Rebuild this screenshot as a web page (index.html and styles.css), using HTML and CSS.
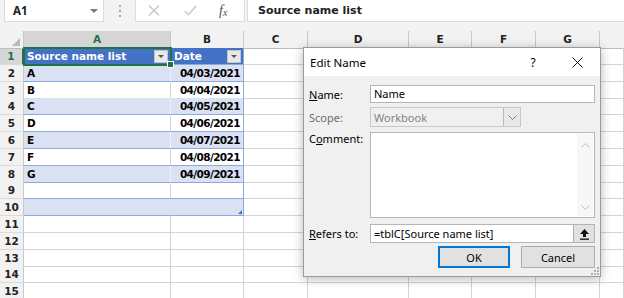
FILE: index.html
```html
<!DOCTYPE html>
<html lang="en">
<head>
    <meta charset="UTF-8">
    <meta name="viewport" content="width=device-width, initial-scale=1.0">
    <title>Edit Name</title>
    <link rel="stylesheet" href="styles.css">
</head>
<body>
    <div class="app">
        <div class="fbar">
            <div class="namebox"><span>A1</span><span class="caret"></span></div>
            <div class="dots"><i></i><i></i><i></i></div>
            <div class="fxbox">
                <svg class="ico-x" width="12" height="11" viewBox="0 0 12 11"><path d="M1 0.5 L11 10.5 M11 0.5 L1 10.5" stroke="#c6c6c6" stroke-width="1.3" fill="none"/></svg>
                <svg class="ico-ok" width="13" height="11" viewBox="0 0 13 11"><path d="M0.8 6 L4.5 9.8 L12.2 0.8" stroke="#c6c6c6" stroke-width="1.4" fill="none"/></svg>
                <span class="fx">f<sub>x</sub></span>
            </div>
            <div class="formula">Source name list</div>
        </div>

        <div class="sheet">
            <div class="row hdr">
                <div class="corner"><span></span></div>
                <div class="ch sel">A</div><div class="ch">B</div><div class="ch">C</div><div class="ch">D</div>
                <div class="ch">E</div><div class="ch">F</div><div class="ch">G</div><div class="ch last"></div>
            </div>
            <div class="row">
                <div class="rh sel">1</div>
                <div class="c t th a1"><span>Source name list</span><span class="filter"></span></div>
                <div class="c t th tb"><span>Date</span><span class="filter"></span></div>
                <div class="c"></div><div class="c"></div><div class="c"></div><div class="c"></div><div class="c"></div><div class="c"></div>
            </div>
            <div class="row">
                <div class="rh">2</div>
                <div class="c t band">A</div><div class="c t band tb num">04/03/2021</div>
                <div class="c"></div><div class="c"></div><div class="c"></div><div class="c"></div><div class="c"></div><div class="c"></div>
            </div>
            <div class="row">
                <div class="rh">3</div>
                <div class="c t">B</div><div class="c t tb num">04/04/2021</div>
                <div class="c"></div><div class="c"></div><div class="c"></div><div class="c"></div><div class="c"></div><div class="c"></div>
            </div>
            <div class="row">
                <div class="rh">4</div>
                <div class="c t band">C</div><div class="c t band tb num">04/05/2021</div>
                <div class="c"></div><div class="c"></div><div class="c"></div><div class="c"></div><div class="c"></div><div class="c"></div>
            </div>
            <div class="row">
                <div class="rh">5</div>
                <div class="c t">D</div><div class="c t tb num">04/06/2021</div>
                <div class="c"></div><div class="c"></div><div class="c"></div><div class="c"></div><div class="c"></div><div class="c"></div>
            </div>
            <div class="row">
                <div class="rh">6</div>
                <div class="c t band">E</div><div class="c t band tb num">04/07/2021</div>
                <div class="c"></div><div class="c"></div><div class="c"></div><div class="c"></div><div class="c"></div><div class="c"></div>
            </div>
            <div class="row">
                <div class="rh">7</div>
                <div class="c t">F</div><div class="c t tb num">04/08/2021</div>
                <div class="c"></div><div class="c"></div><div class="c"></div><div class="c"></div><div class="c"></div><div class="c"></div>
            </div>
            <div class="row">
                <div class="rh">8</div>
                <div class="c t band">G</div><div class="c t band tb num">04/09/2021</div>
                <div class="c"></div><div class="c"></div><div class="c"></div><div class="c"></div><div class="c"></div><div class="c"></div>
            </div>
            <div class="row">
                <div class="rh">9</div>
                <div class="c t"></div><div class="c t tb"></div>
                <div class="c"></div><div class="c"></div><div class="c"></div><div class="c"></div><div class="c"></div><div class="c"></div>
            </div>
            <div class="row">
                <div class="rh">10</div>
                <div class="c t band solid"></div><div class="c t band tb end"></div>
                <div class="c"></div><div class="c"></div><div class="c"></div><div class="c"></div><div class="c"></div><div class="c"></div>
            </div>
            <div class="row">
                <div class="rh">11</div>
                <div class="c"></div><div class="c"></div><div class="c"></div><div class="c"></div><div class="c"></div><div class="c"></div><div class="c"></div><div class="c"></div>
            </div>
            <div class="row">
                <div class="rh">12</div>
                <div class="c"></div><div class="c"></div><div class="c"></div><div class="c"></div><div class="c"></div><div class="c"></div><div class="c"></div><div class="c"></div>
            </div>
            <div class="row">
                <div class="rh">13</div>
                <div class="c"></div><div class="c"></div><div class="c"></div><div class="c"></div><div class="c"></div><div class="c"></div><div class="c"></div><div class="c"></div>
            </div>
            <div class="row">
                <div class="rh">14</div>
                <div class="c"></div><div class="c"></div><div class="c"></div><div class="c"></div><div class="c"></div><div class="c"></div><div class="c"></div><div class="c"></div>
            </div>
            <div class="row">
                <div class="rh">15</div>
                <div class="c"></div><div class="c"></div><div class="c"></div><div class="c"></div><div class="c"></div><div class="c"></div><div class="c"></div><div class="c"></div>
            </div>
        </div>

        <div class="dialog">
            <div class="dlg-title">
                <span class="dlg-name">Edit Name</span>
                <span class="dlg-help">?</span>
                <span class="dlg-close">
                    <svg width="11" height="11" viewBox="0 0 11 11"><path d="M0.5 0.5 L10.5 10.5 M10.5 0.5 L0.5 10.5" stroke="#111" stroke-width="1" fill="none"/></svg>
                </span>
            </div>
            <div class="dlg-body">
                <div class="frow f-name">
                    <label class="lbl"><u>N</u>ame:</label>
                    <div class="field">Name</div>
                </div>
                <div class="frow f-scope">
                    <label class="lbl off">Scope:</label>
                    <div class="combo">
                        <span>Workbook</span>
                        <span class="combo-btn">
                            <svg width="9" height="5" viewBox="0 0 9 5"><path d="M0.5 0.5 L4.5 4.5 L8.5 0.5" stroke="#7a7a7a" stroke-width="1" fill="none"/></svg>
                        </span>
                    </div>
                </div>
                <div class="frow f-comment">
                    <label class="lbl">C<u>o</u>mment:</label>
                    <div class="memo">
                        <div class="memo-bar">
                            <svg width="9" height="5" viewBox="0 0 9 5"><path d="M0.5 4.5 L4.5 0.5 L8.5 4.5" stroke="#bdbdbd" stroke-width="1" fill="none"/></svg>
                            <svg width="9" height="5" viewBox="0 0 9 5"><path d="M0.5 0.5 L4.5 4.5 L8.5 0.5" stroke="#bdbdbd" stroke-width="1" fill="none"/></svg>
                        </div>
                    </div>
                </div>
                <div class="frow f-refers">
                    <label class="lbl"><u>R</u>efers to:</label>
                    <div class="field ref">
                        <span>=tblC[Source name list]</span>
                        <span class="ref-btn">
                            <svg width="11" height="12" viewBox="0 0 11 12"><path d="M5.5 1 L10 6 L7 6 L7 9 L4 9 L4 6 L1 6 Z" fill="#111"/><rect x="1" y="10.5" width="9" height="1.3" fill="#111"/></svg>
                        </span>
                    </div>
                </div>
                <div class="btns">
                    <button class="btn ok">OK</button>
                    <button class="btn">Cancel</button>
                </div>
            </div>
            <svg class="grip" width="8" height="8" viewBox="0 0 8 8">
                <rect x="6" y="0" width="2" height="2" fill="#b0b0b0"/>
                <rect x="3" y="3" width="2" height="2" fill="#b0b0b0"/><rect x="6" y="3" width="2" height="2" fill="#b0b0b0"/>
                <rect x="0" y="6" width="2" height="2" fill="#b0b0b0"/><rect x="3" y="6" width="2" height="2" fill="#b0b0b0"/><rect x="6" y="6" width="2" height="2" fill="#b0b0b0"/>
            </svg>
        </div>
    </div>
</body>
</html>
```

FILE: styles.css
```css
body {
    margin: 0;
    padding: 0;
    background-color: #fff;
    font-family: "DejaVu Sans", Verdana, sans-serif;
    overflow: hidden;
}

.app {
    position: relative;
    width: 624px;
    height: 298px;
    overflow: hidden;
}

/* formula bar */

.fbar {
    display: flex;
    align-items: flex-start;
    height: 31px;
    padding-left: 4px;
    background-color: #f3f3f3;
    box-sizing: border-box;
}

.namebox {
    display: flex;
    align-items: center;
    justify-content: space-between;
    width: 100px;
    height: 22px;
    padding: 0 5px 0 8px;
    box-sizing: border-box;
    background-color: #fff;
    border: 1px solid #dcdcdc;
    border-top: none;
    font-family: "Noto Sans", sans-serif;
    font-weight: bold;
    font-size: 11.5px;
    color: #222;
}

.caret {
    width: 0;
    height: 0;
    border-left: 4px solid transparent;
    border-right: 4px solid transparent;
    border-top: 4px solid #7a7a7a;
}

.dots {
    display: flex;
    flex-direction: column;
    align-items: center;
    gap: 3px;
    width: 31px;
    padding-top: 5px;
}

.dots i {
    width: 2px;
    height: 2px;
    background-color: #a8a8a8;
}

.fxbox {
    display: flex;
    align-items: center;
    width: 110px;
    height: 22px;
    box-sizing: border-box;
    background-color: #fff;
    border: 1px solid #dcdcdc;
    border-top: none;
    padding-left: 12px;
}

.ico-ok {
    margin-left: 24px;
}

.fx {
    margin-left: 22px;
    font-family: "Liberation Serif", serif;
    font-style: italic;
    font-size: 14px;
    color: #555;
}

.fx sub {
    font-size: 10px;
    vertical-align: -1px;
}

.formula {
    flex: 1;
    height: 22px;
    margin-left: 2px;
    padding-left: 10px;
    box-sizing: border-box;
    background-color: #fff;
    border-left: 1px solid #dcdcdc;
    border-bottom: 1px solid #dcdcdc;
    font-weight: bold;
    font-size: 11px;
    line-height: 21px;
    color: #222;
}

/* sheet grid */

.row {
    display: grid;
    grid-template-columns: 24px 147px 73px 64px 101px 63px 64px 64px 24px;
    height: 16.8px;
}

.row.hdr {
    height: 17px;
}

.corner,
.ch {
    background-color: #f2f2f2;
    border-right: 1px solid #c8c8c8;
    border-bottom: 1px solid #bdbdbd;
    box-sizing: border-box;
}

.corner {
    position: relative;
}

.corner span {
    position: absolute;
    right: 3px;
    bottom: 2px;
    width: 0;
    height: 0;
    border-left: 8px solid transparent;
    border-bottom: 8px solid #b9b9b9;
}

.ch {
    text-align: center;
    font-weight: bold;
    font-size: 10.5px;
    line-height: 16px;
    color: #222;
}

.ch.sel {
    background-color: #d6d6d6;
    color: #217346;
    border-bottom: 2px solid #217346;
}

.ch.last {
    border-right: none;
}

.rh {
    background-color: #f2f2f2;
    border-right: 1px solid #c8c8c8;
    border-bottom: 1px solid #dadada;
    box-sizing: border-box;
    text-align: center;
    font-weight: bold;
    font-size: 10.5px;
    line-height: 16px;
    color: #222;
}

.rh.sel {
    background-color: #d6d6d6;
    color: #217346;
    border-right: 2px solid #217346;
}

.c {
    border-right: 1px solid #d4d4d4;
    border-bottom: 1px solid #d4d4d4;
    box-sizing: border-box;
    padding: 0 3px;
    font-weight: bold;
    font-size: 10.5px;
    line-height: 16px;
    color: #000;
    white-space: nowrap;
}

/* table cells */

.t {
    border-bottom-color: #8ea9db;
}

.band {
    background-color: #d9e1f2;
    border-right-color: #eef1f8;
}

.tb {
    border-right-color: #8ea9db;
}

.solid {
    border-right-color: #d9e1f2;
}

.num {
    text-align: right;
    padding-right: 3px;
    letter-spacing: -0.6px;
}

.th {
    display: flex;
    align-items: center;
    justify-content: space-between;
    padding-right: 2px;
    background-color: #4472c4;
    color: #fff;
    border-bottom-color: #8ea9db;
}

.a1 {
    position: relative;
    border-right-color: #4472c4;
    outline: 2px solid #217346;
    outline-offset: -1px;
}

.a1::after {
    content: "";
    position: absolute;
    right: -4px;
    bottom: -4px;
    width: 5px;
    height: 5px;
    background-color: #217346;
    border: 1px solid #fff;
}

.filter {
    display: flex;
    align-items: center;
    justify-content: center;
    width: 14px;
    height: 13px;
    background-color: #e8e8e8;
    border: 1px solid #c4c4c4;
    box-sizing: border-box;
}

.filter::before {
    content: "";
    border-left: 3px solid transparent;
    border-right: 3px solid transparent;
    border-top: 3px solid #555;
}

.end {
    position: relative;
}

.end::after {
    content: "";
    position: absolute;
    right: 1px;
    bottom: 1px;
    border-left: 4px solid transparent;
    border-bottom: 4px solid #4472c4;
}

/* Edit Name dialog */

.dialog {
    position: absolute;
    left: 303px;
    top: 47px;
    width: 298px;
    height: 230px;
    box-sizing: border-box;
    background-color: #f0f0f0;
    border: 1px solid #9b9b9b;
    box-shadow: 0 2px 10px rgba(0, 0, 0, 0.28);
    font-family: "Noto Sans", "Open Sans", sans-serif;
    font-size: 11px;
    color: #000;
}

.dlg-title {
    display: flex;
    align-items: center;
    height: 28px;
    background-color: #fff;
}

.dlg-name {
    flex: 1;
    padding-left: 6px;
    font-size: 11.5px;
}

.dlg-help {
    width: 30px;
    margin-right: 6px;
    text-align: center;
    font-size: 12px;
}

.dlg-close {
    display: flex;
    align-items: center;
    justify-content: center;
    width: 46px;
    height: 28px;
}

.dlg-body {
    padding: 9px 5px 0 5px;
}

.frow {
    display: flex;
    align-items: center;
}

.lbl {
    width: 61px;
    flex: none;
}

.lbl.off {
    color: #6d6d6d;
}

.field {
    flex: 1;
    height: 18px;
    box-sizing: border-box;
    background-color: #fff;
    border: 1px solid #b5b5b5;
    padding-left: 3px;
    line-height: 16px;
}

.f-scope {
    margin-top: 4px;
}

.combo {
    display: flex;
    align-items: center;
    justify-content: space-between;
    width: 151px;
    height: 20px;
    box-sizing: border-box;
    background-color: #f0f0f0;
    border: 1px solid #c8c8c8;
    padding-left: 3px;
    color: #838383;
}

.combo-btn {
    display: flex;
    align-items: center;
    justify-content: center;
    width: 17px;
    height: 18px;
    box-sizing: border-box;
    border-left: 1px solid #b9b9b9;
    background-color: #e9e9e9;
}

.f-comment {
    align-items: flex-start;
    margin-top: 5px;
}

.f-comment .lbl {
    line-height: 13px;
}

.memo {
    flex: 1;
    display: flex;
    justify-content: flex-end;
    height: 86px;
    box-sizing: border-box;
    background-color: #fff;
    border: 1px solid #b5b5b5;
}

.memo-bar {
    display: flex;
    flex-direction: column;
    align-items: center;
    justify-content: space-between;
    width: 16px;
    margin: 1px;
    padding: 9px 0 6px;
    box-sizing: border-box;
    background-color: #f7f7f7;
}

.f-refers {
    margin-top: 6px;
}

.field.ref {
    display: flex;
    align-items: center;
    justify-content: space-between;
    height: 19px;
    padding-right: 0;
}

.ref-btn {
    display: flex;
    align-items: center;
    justify-content: center;
    width: 21px;
    height: 17px;
    box-sizing: border-box;
    background-color: #e1e1e1;
    border-left: 1px solid #adadad;
}

.btns {
    display: flex;
    justify-content: flex-end;
    margin-top: 3px;
}

.btn {
    width: 74px;
    height: 22px;
    margin: 0;
    padding: 0;
    box-sizing: border-box;
    background-color: #e1e1e1;
    border: 1px solid #adadad;
    font-family: "Noto Sans", "Open Sans", sans-serif;
    font-size: 11px;
    color: #000;
}

.btn.ok {
    width: 72px;
    margin-right: 11px;
    border: 2px solid #0078d7;
}

.grip {
    position: absolute;
    right: 1px;
    bottom: 1px;
}
```
